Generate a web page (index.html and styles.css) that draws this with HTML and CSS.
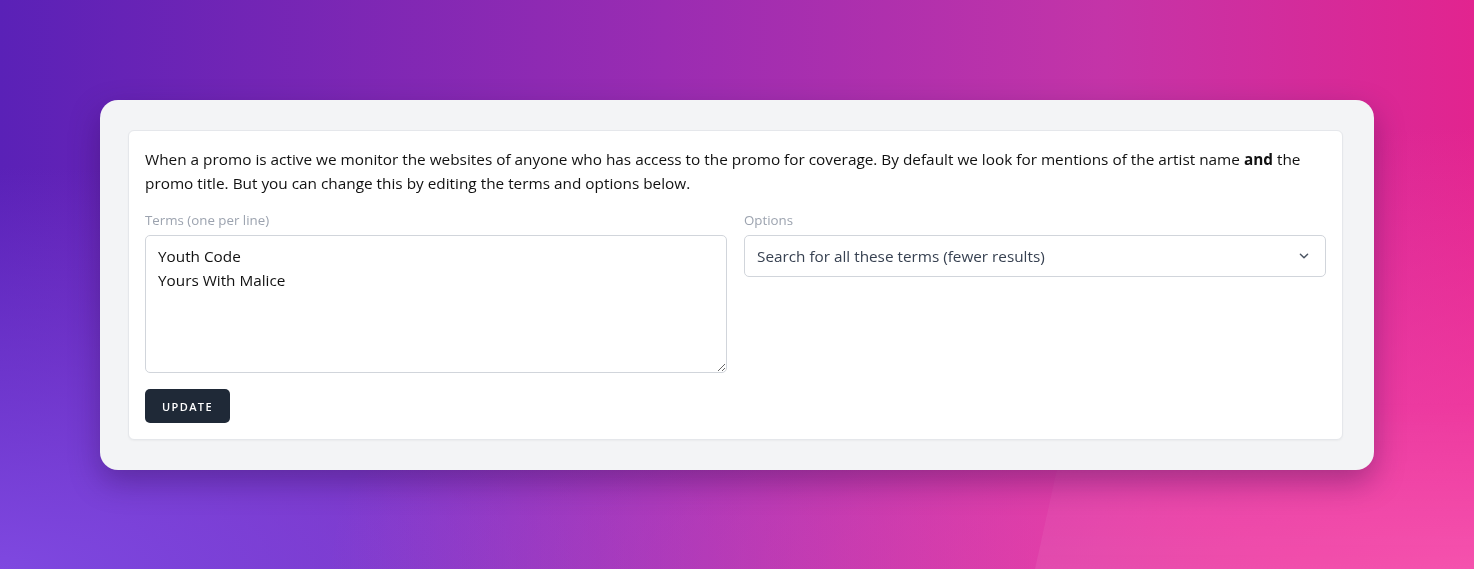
FILE: index.html
```html
<!DOCTYPE html>
<html lang="en">

<head>
    <meta charset="UTF-8">
    <meta name="viewport" content="width=device-width, initial-scale=1.0">
    <title>Promo Coverage</title>
    <link rel="stylesheet" href="styles.css">
</head>

<body>

    <div class="window">
        <div class="card">
            <p class="intro">When a promo is active we monitor the websites of anyone who has access to the promo for coverage. By default we look for mentions of the artist name <strong>and</strong> the promo title. But you can change this by editing the terms and options below.</p>

            <form class="coverage-form" onsubmit="event.preventDefault();">
                <div class="fields">
                    <div class="field">
                        <label for="terms">Terms (one per line)</label>
                        <textarea id="terms">Youth Code
Yours With Malice</textarea>
                    </div>
                    <div class="field">
                        <label for="options">Options</label>
                        <div class="select-wrap">
                            <select id="options">
                                <option>Search for all these terms (fewer results)</option>
                                <option>Search for any of these terms (more results)</option>
                            </select>
                            <svg class="chevron" viewBox="0 0 20 20" width="18" height="18" fill="none" stroke="#4b5563" stroke-width="1.6" stroke-linecap="round" stroke-linejoin="round">
                                <path d="M6 8l4 4 4-4"/>
                            </svg>
                        </div>
                    </div>
                </div>
                <button type="submit">Update</button>
            </form>
        </div>
    </div>

</body>
</html>
```

FILE: styles.css
```css
html, body {
    height: 100%;
}

body {
    margin: 0;
    font-family: 'Open Sans', 'Lato', sans-serif;
    background:
        radial-gradient(ellipse at 100% 100%, #f545a8 0%, rgba(245, 69, 168, 0) 55%),
        radial-gradient(ellipse at 0% 100%, #7f48e0 0%, rgba(127, 72, 224, 0) 50%),
        linear-gradient(90deg, #5a21b7 0%, #9a2cb2 45%, #c434a8 75%, #e2248f 100%);
    padding: 100px 100px 0;
    box-sizing: border-box;
    overflow: hidden;
}

/* light diagonal facet in the wallpaper */
body::before {
    content: "";
    position: fixed;
    inset: 0;
    clip-path: polygon(1161px 0, 100% 0, 100% 100%, 1035px 100%);
    background: linear-gradient(to bottom, rgba(255, 255, 255, 0) 70%, rgba(255, 255, 255, 0.07) 100%);
    z-index: 0;
}

.window {
    position: relative;
    z-index: 1;
    background-color: #f3f4f6;
    border-radius: 18px;
    padding: 30px 31px 30px 28px;
    box-shadow: 0 12px 30px rgba(40, 10, 70, 0.35);
}

.card {
    background-color: #ffffff;
    border: 1px solid #e5e7eb;
    border-radius: 6px;
    padding: 16px;
    box-shadow: 0 1px 2px rgba(0, 0, 0, 0.04);
}

.intro {
    margin: 0;
    font-size: 15.35px;
    line-height: 24px;
    color: #111111;
}

.intro strong {
    font-weight: 700;
}

.fields {
    display: grid;
    grid-template-columns: 1fr 1fr;
    gap: 17px;
    margin-top: 15px;
}

.field label {
    display: block;
    font-size: 13.3px;
    line-height: 20px;
    color: #9ca3af;
    margin-bottom: 5px;
}

textarea {
    display: block;
    width: 100%;
    box-sizing: border-box;
    height: 138px;
    padding: 8px 12px;
    font-family: inherit;
    font-size: 15.3px;
    line-height: 24px;
    color: #111111;
    border: 1px solid #d1d5db;
    border-radius: 5px;
    resize: vertical;
}

.select-wrap {
    position: relative;
}

select {
    display: block;
    width: 100%;
    height: 42px;
    box-sizing: border-box;
    padding: 0 40px 0 12px;
    font-family: inherit;
    font-size: 15.3px;
    color: #374151;
    background-color: #ffffff;
    border: 1px solid #d1d5db;
    border-radius: 5px;
    appearance: none;
    -webkit-appearance: none;
}

.chevron {
    position: absolute;
    right: 13px;
    top: 12px;
    pointer-events: none;
}

button {
    margin-top: 16px;
    background-color: #1f2937;
    color: #ffffff;
    border: none;
    border-radius: 5px;
    height: 34px;
    padding: 0 17px;
    font-family: inherit;
    font-size: 11px;
    font-weight: 600;
    letter-spacing: 1.4px;
    text-transform: uppercase;
    cursor: pointer;
}

button:hover {
    background-color: #111827;
}
```
